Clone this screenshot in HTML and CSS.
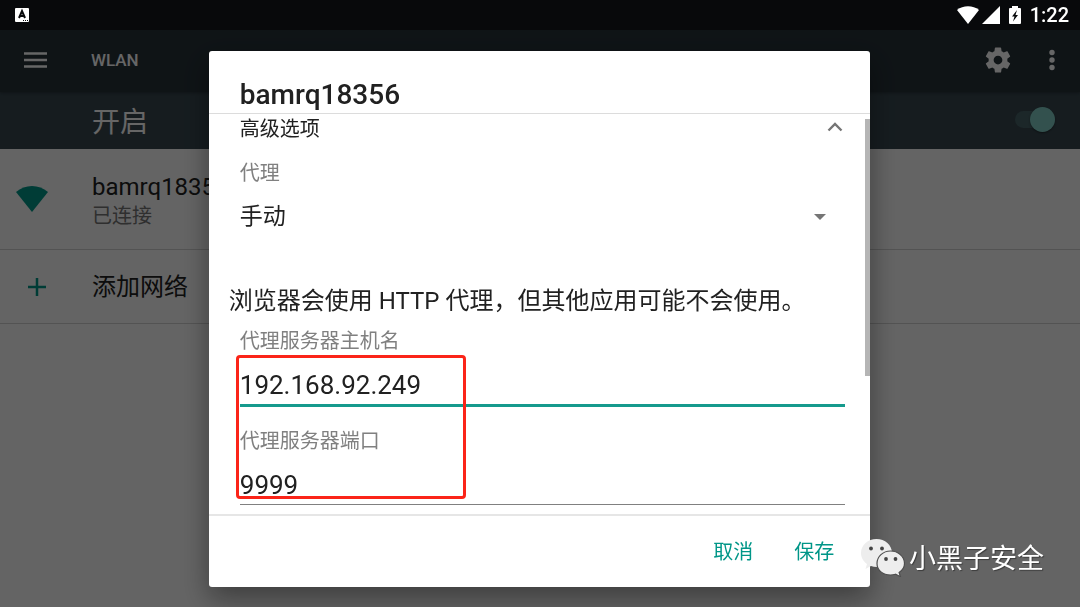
FILE: index.html
```html
<!DOCTYPE html>
<html lang="zh-CN">
<head>
    <meta charset="UTF-8">
    <meta name="viewport" content="width=device-width, initial-scale=1">
    <title>WLAN</title>
    <link rel="stylesheet" href="styles.css">
</head>
<body>
    <header class="status-bar">
        <svg class="status-ime" width="16" height="16" viewBox="0 0 16 16">
            <rect x="1" y="1" width="14" height="14" rx="1" fill="#fff"/>
            <path d="M5 11l3-7 3 7M6 9h4" fill="none" stroke="#08090b" stroke-width="2"/>
            <path d="M9 13.500h1M11 13.500h1M13 13.500h1" stroke="#08090b" stroke-width="1"/>
        </svg>
        <div class="status-right">
            <svg width="22" height="18" viewBox="0 0 22 18"><path d="M0 4C6-1 16-1 22 4L11 18z" fill="#fff"/></svg>
            <svg width="18" height="18" viewBox="0 0 18 18"><path d="M18 0v18H0z" fill="#fff"/></svg>
            <svg class="status-battery" width="12" height="18" viewBox="0 0 12 18">
                <path d="M3 0h6v2h2q1 0 1 1v14q0 1-1 1H1q-1 0-1-1V3q0-1 1-1h2z" fill="#fff"/>
                <path d="M8 4L3 10.500h2.500L4 15.500l5-6.500H6.500z" fill="#08090b"/>
            </svg>
            <span class="clock">1:22</span>
        </div>
    </header>

    <main class="wifi-page">
        <div class="app-bar">
            <button class="icon-button menu-button" aria-label="菜单">
                <svg width="24" height="16" viewBox="0 0 24 16"><path d="M0 1.500h23M0 8h23M0 14.500h23" stroke="#fff" stroke-width="2.500"/></svg>
            </button>
            <h1>WLAN</h1>
            <button class="icon-button" aria-label="设置">
                <svg width="30" height="30" viewBox="0 0 24 24"><path fill="#fff" d="M19.430 12.980c.04-.32.07-.64.07-.98s-.03-.66-.07-.98l2.110-1.650c.19-.15.24-.42.12-.64l-2-3.460c-.12-.22-.39-.3-.61-.22l-2.490 1c-.52-.4-1.080-.73-1.690-.98l-.38-2.650C14.460 2.180 14.250 2 14 2h-4c-.25 0-.46.18-.49.42l-.38 2.650c-.61.25-1.170.59-1.690.98l-2.490-1c-.23-.09-.49 0-.61.22l-2 3.460c-.13.22-.07.49.12.64l2.110 1.650c-.04.32-.07.65-.07.98s.03.66.07.98l-2.110 1.650c-.19.15-.24.42-.12.64l2 3.460c.12.22.39.3.61.22l2.490-1c.52.4 1.080.73 1.690.98l.38 2.650c.03.24.24.42.49.42h4c.25 0 .46-.18.49-.42l.38-2.650c.61-.25 1.170-.59 1.690-.98l2.490 1c.23.09.49 0 .61-.22l2-3.460c.12-.22.07-.49-.12-.64l-2.110-1.650zM12 15.500c-1.930 0-3.500-1.570-3.500-3.500s1.570-3.500 3.500-3.500 3.500 1.570 3.500 3.500-1.570 3.500-3.500 3.500z"/></svg>
            </button>
            <button class="icon-button more-button" aria-label="更多选项">
                <svg width="6" height="22" viewBox="0 0 6 22" fill="#fff"><circle cx="3" cy="3.500" r="2.700"/><circle cx="3" cy="11" r="2.700"/><circle cx="3" cy="18.500" r="2.700"/></svg>
            </button>
        </div>

        <div class="switch-bar">
            <label for="wlanSwitch">开启</label>
            <input type="checkbox" id="wlanSwitch" class="switch" checked>
        </div>

        <div class="network network-connected">
            <div class="network-icon">
                <svg width="32" height="26" viewBox="0 0 32 26"><path d="M0 6C9-2 23-2 32 6L16 26z" fill="#009688"/></svg>
            </div>
            <div class="network-text">
                <div class="network-name">bamrq18356</div>
                <div class="network-state">已连接</div>
            </div>
        </div>
        <div class="network network-add">
            <div class="network-icon">
                <svg class="plus" width="18" height="18" viewBox="0 0 18 18"><path d="M9 0v18M0 9h18" stroke="#009688" stroke-width="2.500"/></svg>
            </div>
            <div class="network-name">添加网络</div>
        </div>
    </main>

    <div class="overlay">
        <form class="dialog">
            <h2>bamrq18356</h2>
            <div class="dialog-body">
                <div class="fields">
                    <button type="button" class="advanced">
                        高级选项
                        <svg width="16" height="10" viewBox="0 0 16 10"><path d="M1.500 8.500L8 2l6.500 6.500" fill="none" stroke="#757575" stroke-width="2.400"/></svg>
                    </button>
                    <label class="field-label proxy-label" for="proxy">代理</label>
                    <div class="select-box">
                        <select id="proxy">
                            <option>手动</option>
                        </select>
                        <svg width="12" height="6" viewBox="0 0 12 6"><path d="M0 0h12L6 6z" fill="#757575"/></svg>
                    </div>
                </div>
                <p class="hint">浏览器会使用 HTTP 代理，但其他应用可能不会使用。</p>
                <div class="fields">
                    <label class="field-label" for="host">代理服务器主机名</label>
                    <input type="text" id="host" class="text-field active" value="192.168.92.249">
                    <label class="field-label port-label" for="port">代理服务器端口</label>
                    <input type="text" id="port" class="text-field" value="9999">
                    <div class="red-box"></div>
                </div>
                <div class="scroll-thumb"></div>
            </div>
            <div class="dialog-buttons">
                <button type="button">取消</button>
                <button type="button">保存</button>
            </div>
        </form>
    </div>

    <div class="watermark">
        <svg width="44" height="38" viewBox="0 0 44 38">
            <path d="M15.500 0C7 0 0 6 0 14c0 4.500 2.300 8.500 6 11l-1.500 5 5.500-3q2.500 1 6 1C24 28 31 22 31 14S24 0 15.500 0z" fill="#ededed"/>
            <path d="M29.500 12C22 12 16 17.500 16 24.500S22 36 29.500 36q2.500 0 5-.8l5 2.500-1.400-4.200c3-2 5.400-5.200 5.400-9C43.500 17.500 37 12 29.500 12z" fill="#ededed" stroke="#4e4e4e" stroke-width="1.200"/>
            <g fill="#444">
                <circle cx="10" cy="9.500" r="1.900"/>
                <circle cx="21" cy="9.500" r="1.900"/>
                <circle cx="25" cy="20" r="1.900"/>
                <circle cx="34.500" cy="20" r="1.900"/>
            </g>
        </svg>
        <span>小黑子安全</span>
    </div>
</body>
</html>
```

FILE: styles.css
```css
* {
    box-sizing: border-box;
}

body {
    margin: 0;
    min-height: 100vh;
    display: flex;
    flex-direction: column;
    background-color: #fafafa;
    color: #212121;
    font-family: Roboto, "Noto Sans CJK SC", sans-serif;
    overflow: hidden;
}

h1, h2, p {
    margin: 0;
}

svg {
    display: block;
    flex: none;
}

button {
    padding: 0;
    border: none;
    background: none;
    font-family: inherit;
    cursor: pointer;
}

/* Status bar stays above the dimmed page */
.status-bar {
    position: relative;
    z-index: 2;
    display: flex;
    align-items: center;
    justify-content: space-between;
    height: 30px;
    padding: 0 11px 0 14px;
    background-color: #08090b;
    color: white;
}

.status-right {
    display: flex;
    align-items: center;
    gap: 3px;
}

.status-battery {
    margin: 0 6px;
}

.clock {
    font-size: 20px;
    font-weight: 500;
    line-height: 32px;
}

.app-bar {
    position: relative;
    display: flex;
    align-items: center;
    height: 62px;
    padding: 0 25px 2px 24px;
    background-color: #263238;
    color: white;
    box-shadow: 0 1px 3px rgba(0, 0, 0, 0.3);
}

.app-bar h1 {
    flex: 1;
    font-size: 17px;
    font-weight: 500;
    line-height: 20px;
}

.menu-button {
    width: 67px;
}

.more-button {
    margin-left: 36px;
}

.switch-bar {
    display: flex;
    align-items: center;
    justify-content: space-between;
    height: 57px;
    padding: 0 25px 2px 92px;
    background-color: #37474f;
    color: white;
    font-size: 28px;
}

.switch {
    appearance: none;
    display: flex;
    align-items: center;
    justify-content: flex-end;
    width: 40px;
    height: 17px;
    margin: 0;
    border-radius: 9px;
    background-color: rgba(128, 203, 196, 0.2);
}

.switch::before {
    content: "";
    width: 25px;
    height: 25px;
    border-radius: 50%;
    background-color: #80cbc4;
    box-shadow: 0 1px 2px rgba(0, 0, 0, 0.4);
}

.network {
    display: flex;
    align-items: center;
    padding-left: 16px;
    border-bottom: 1px solid #d0d0d0;
}

.network-connected {
    height: 101px;
}

.network-add {
    height: 74px;
}

.network-icon {
    width: 76px;
}

.plus {
    margin-left: 12px;
}

.network-text {
    padding-top: 3px;
}

.network-name {
    font-size: 24px;
    line-height: 30px;
}

.network-state {
    font-size: 20px;
    line-height: 28px;
    color: #757575;
}

.overlay {
    position: fixed;
    inset: 0;
    z-index: 1;
    display: flex;
    align-items: center;
    justify-content: center;
    padding: 30px 1px 0 0;
    background-color: rgba(0, 0, 0, 0.6);
}

.dialog {
    width: 61.3%;
    background-color: white;
    border-radius: 3px;
    box-shadow: 0 12px 28px rgba(0, 0, 0, 0.4);
}

.dialog h2 {
    padding: 26px 31px 0;
    border-bottom: 1px solid #dcdcdc;
    font-size: 28px;
    font-weight: 500;
    line-height: 36px;
}

.dialog-body {
    position: relative;
    padding: 1px 25px 9px 20px;
    border-bottom: 2px solid #e6e6e6;
}

.fields {
    position: relative;
    display: flex;
    flex-direction: column;
    padding-left: 11px;
}

.advanced {
    display: flex;
    align-items: center;
    justify-content: space-between;
    padding-right: 2px;
    color: #212121;
    font-size: 20px;
    line-height: 28px;
}

.advanced svg {
    margin-bottom: 4px;
}

.field-label {
    color: #808080;
    font-size: 20px;
    line-height: 28px;
}

.proxy-label {
    margin-top: 16px;
}

.port-label {
    margin-top: 20px;
}

.select-box {
    display: grid;
    align-items: center;
    margin-top: 14px;
}

.select-box select,
.select-box svg {
    grid-area: 1 / 1;
}

.select-box select {
    appearance: none;
    height: 32px;
    padding: 0;
    border: none;
    background: none;
    color: #212121;
    font-family: inherit;
    font-size: 23px;
}

.select-box svg {
    justify-self: end;
    margin-right: 19px;
    pointer-events: none;
}

.hint {
    margin: 52px 0 10px;
    font-size: 24px;
    line-height: 32px;
}

.text-field {
    height: 50px;
    padding: 15px 0 4px;
    border: none;
    border-bottom: 1px solid #808080;
    background: none;
    color: #212121;
    font-family: inherit;
    font-size: 26px;
    outline: none;
}

.text-field.active {
    height: 52px;
    border-bottom: 3px solid #159a8d;
}

/* Highlight around host and port */
.red-box {
    position: absolute;
    top: 28px;
    left: 7px;
    width: 230px;
    height: 144px;
    border: 3px solid #fb2418;
    border-radius: 4px;
    pointer-events: none;
}

.scroll-thumb {
    position: absolute;
    top: 5px;
    right: 0;
    width: 5px;
    height: 257px;
    background-color: #b5b5b5;
}

.dialog-buttons {
    display: flex;
    justify-content: flex-end;
    gap: 41px;
    padding: 22px 36px 20px 0;
}

.dialog-buttons button {
    color: #009688;
    font-size: 20px;
    line-height: 29px;
}

.watermark {
    position: fixed;
    right: 36px;
    bottom: 28px;
    z-index: 3;
    display: flex;
    align-items: flex-start;
    gap: 4px;
    color: white;
    font-size: 27px;
    line-height: 40px;
    text-shadow: 1px 1px 1px rgba(0, 0, 0, 0.4);
}
```
